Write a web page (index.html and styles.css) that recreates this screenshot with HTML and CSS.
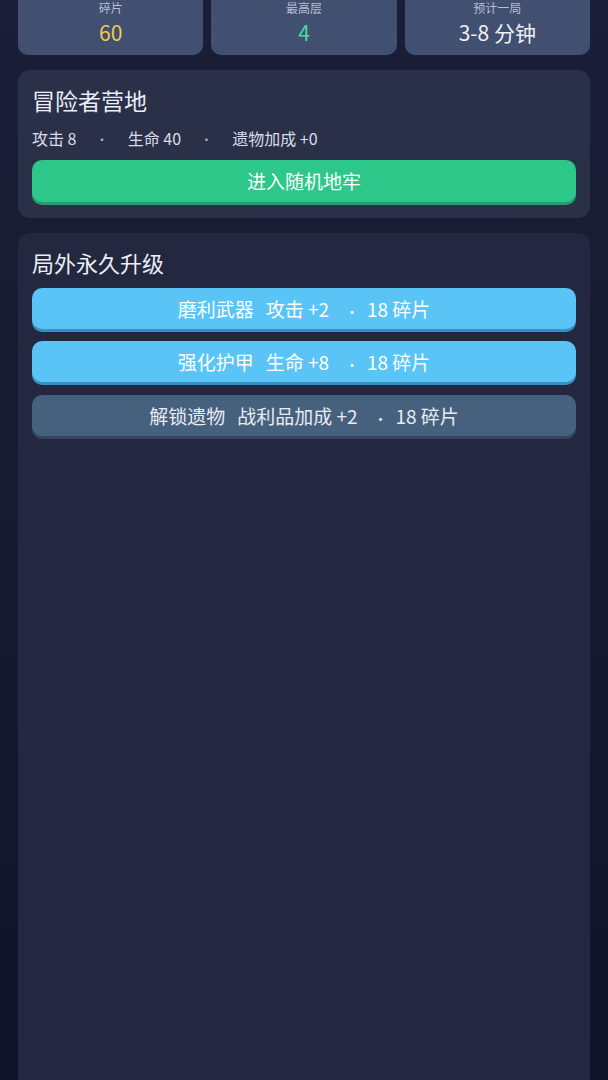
FILE: index.html
```html
<!DOCTYPE html>
<html lang="zh-CN">
<head>
    <meta charset="UTF-8">
    <meta name="viewport" content="width=device-width, initial-scale=1.0">
    <title>冒险者营地</title>
    <link rel="stylesheet" href="styles.css">
</head>
<body>

    <div class="stats">
        <div class="stat">
            <div class="stat-label">碎片</div>
            <div class="stat-value gold">60</div>
        </div>
        <div class="stat">
            <div class="stat-label">最高层</div>
            <div class="stat-value green">4</div>
        </div>
        <div class="stat">
            <div class="stat-label">预计一局</div>
            <div class="stat-value">3-8 分钟</div>
        </div>
    </div>

    <div class="panel camp">
        <div class="panel-title">冒险者营地</div>
        <div class="hero-line">攻击 8 <span class="dot">·</span> 生命 40 <span class="dot">·</span> 遗物加成 +0</div>
        <button class="btn btn-green">进入随机地牢</button>
    </div>

    <div class="panel upgrades">
        <div class="panel-title">局外永久升级</div>
        <button class="btn btn-blue">磨利武器<span class="gap"></span>攻击 +2<span class="sep">·</span>18 碎片</button>
        <button class="btn btn-blue">强化护甲<span class="gap"></span>生命 +8<span class="sep">·</span>18 碎片</button>
        <button class="btn btn-grey">解锁遗物<span class="gap"></span>战利品加成 +2<span class="sep">·</span>18 碎片</button>
    </div>

</body>
</html>
```

FILE: styles.css
```css
html, body {
    height: 100%;
}

body {
    margin: 0;
    padding: 0 18px;
    font-family: "Noto Sans CJK SC", "Noto Sans", sans-serif;
    color: #e6e8f0;
    background: linear-gradient(180deg, #1a1f37 0%, #151a30 50%, #10142a 100%);
    display: flex;
    flex-direction: column;
    box-sizing: border-box;
    overflow: hidden;
}

.stats {
    display: grid;
    grid-template-columns: repeat(3, 1fr);
    gap: 8px;
}

.stat {
    background: #414f70;
    border-radius: 0 0 10px 10px;
    height: 55px;
    text-align: center;
}

.stat-label {
    font-size: 12px;
    line-height: 16px;
    color: #b7bfd3;
}

.stat-value {
    font-size: 21px;
    line-height: 32px;
    color: #eef0f6;
}

.stat-value.gold {
    color: #f2c94f;
}

.stat-value.green {
    color: #4fd8a4;
}

.panel {
    border-radius: 12px;
    padding: 16px 14px 13px;
    margin-top: 15px;
    display: flex;
    flex-direction: column;
}

.camp {
    background: #2b3049;
}

.upgrades {
    background: #232840;
    flex: 1;
    padding-top: 15px;
    border-radius: 12px 12px 0 0;
}

.panel-title {
    font-size: 22px;
    line-height: 28px;
    color: #eceef5;
}

.camp .panel-title {
    font-size: 23px;
}

.hero-line {
    font-size: 16px;
    line-height: 22px;
    height: 22px;
    margin-top: 13px;
    color: #d9dce6;
}

.dot {
    font-size: 12px;
    line-height: 1;
    padding: 0 16px;
    color: #aab0c2;
}

.btn {
    font-family: inherit;
    font-size: 19px;
    line-height: 24px;
    color: #ffffff;
    border: none;
    border-radius: 10px;
    height: 42px;
    padding: 0;
    cursor: pointer;
    margin-bottom: 3px;
}

.gap {
    display: inline-block;
    width: 12px;
}

.sep {
    font-size: 14px;
    line-height: 1;
    padding: 0 8px 0 16px;
}

.camp .btn {
    margin-top: 11px;
}

.upgrades .btn {
    height: 41px;
    margin-top: 9px;
}

.upgrades .btn:first-of-type {
    margin-top: 12px;
}

.upgrades .btn:last-of-type {
    margin-top: 10px;
}

.btn-green {
    background: #2ec78a;
    box-shadow: 0 3px 0 #22a06e;
}

.btn-blue {
    background: #5bc4f6;
    box-shadow: 0 3px 0 #3a8fc0;
}

.btn-grey {
    background: #46617d;
    color: #e8ecf2;
    box-shadow: 0 3px 0 #34475e;
}
```
